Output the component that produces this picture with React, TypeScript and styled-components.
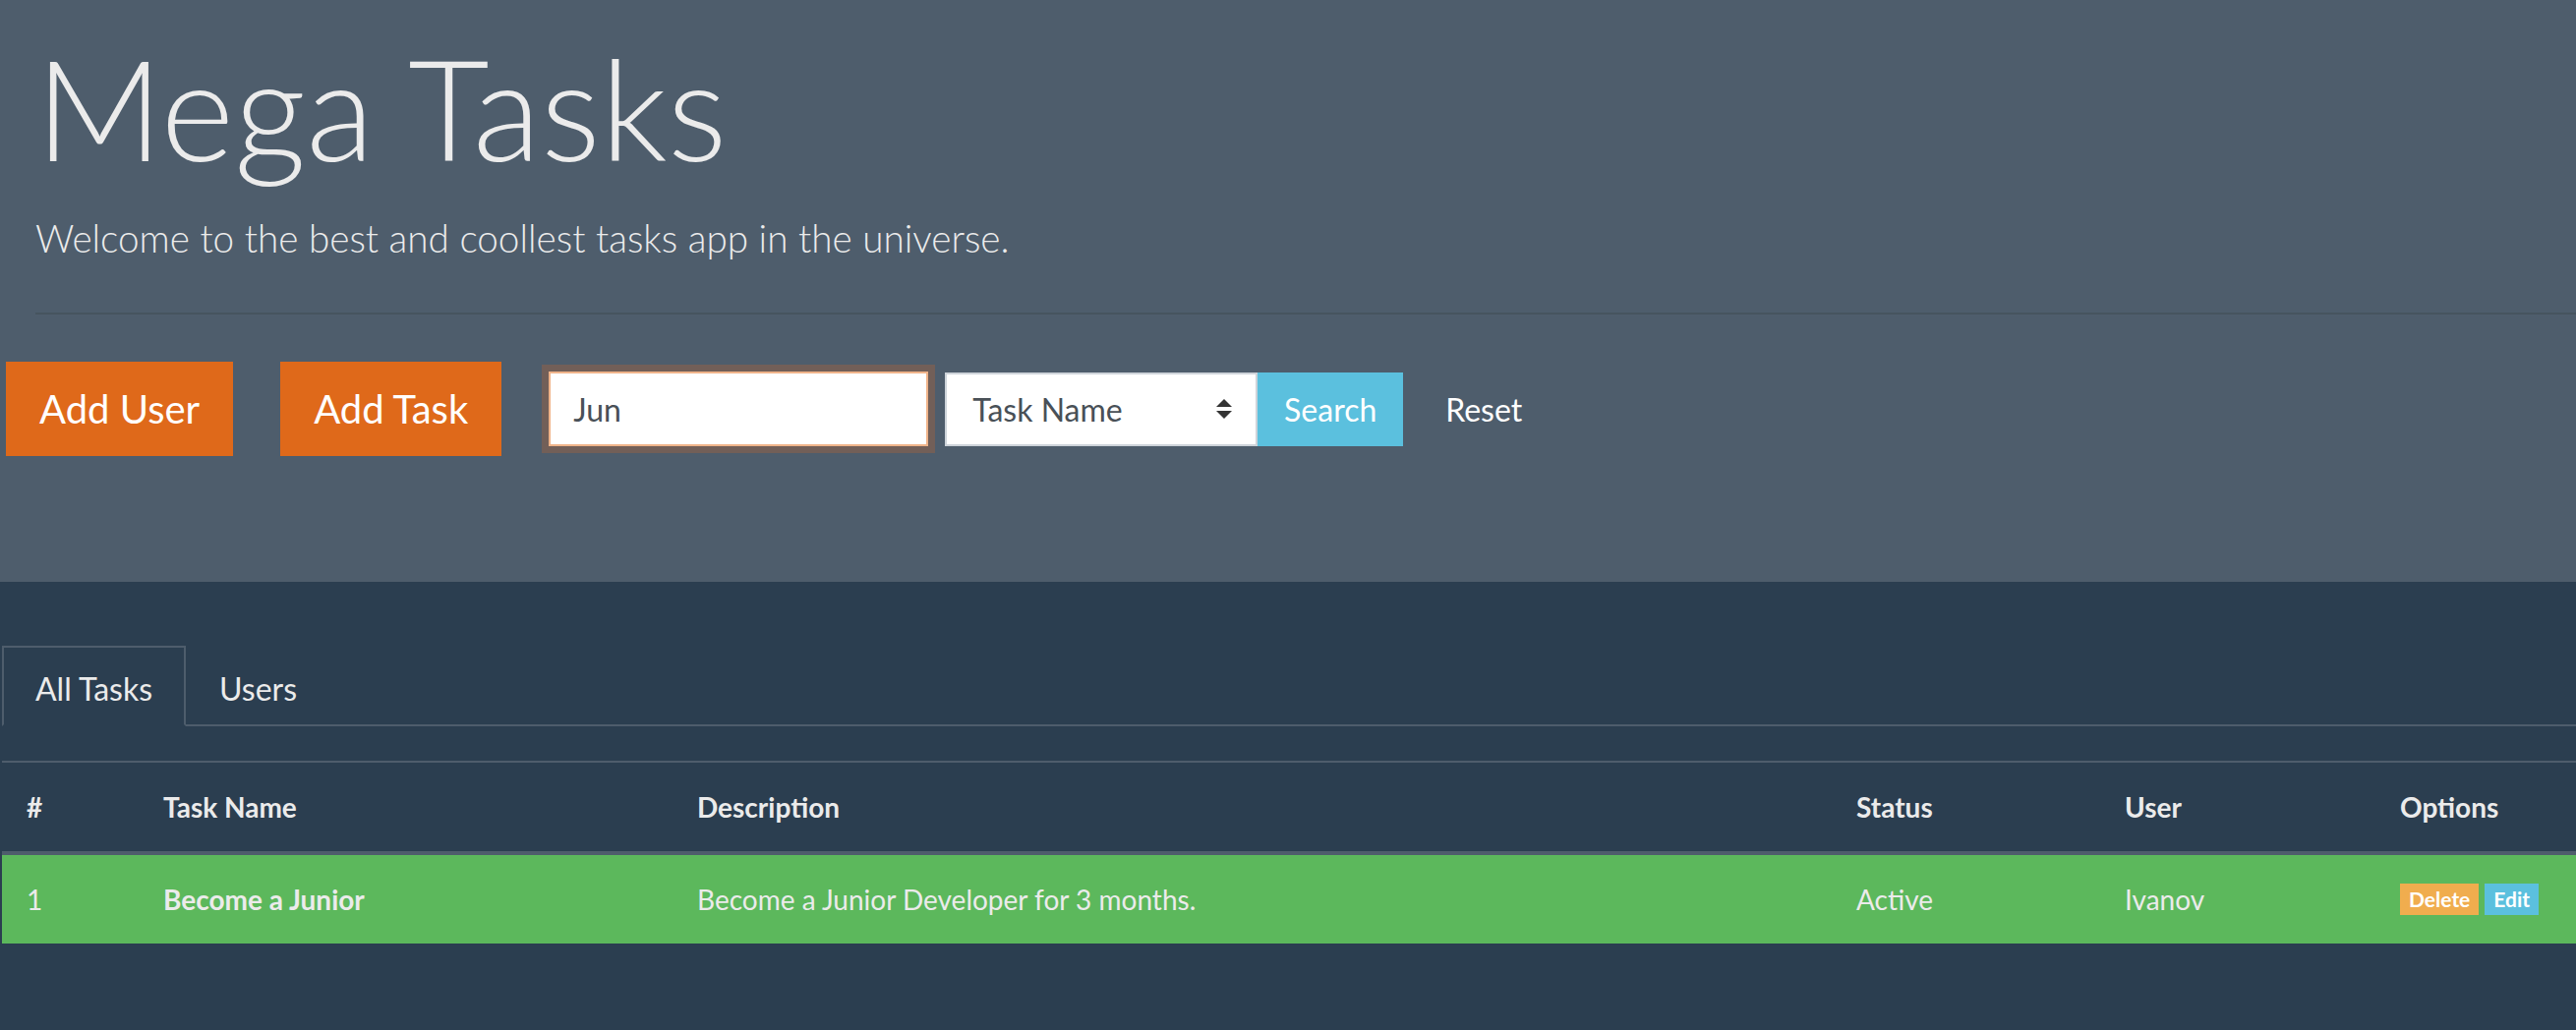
import React from "react";
import styled, { createGlobalStyle } from "styled-components";

const Global = createGlobalStyle`
  html, body { margin: 0; padding: 0; }
  body {
    background: #2b3e50;
    color: #ebebeb;
    font-family: Lato, "Open Sans", "Liberation Sans", sans-serif;
  }
  * { box-sizing: border-box; }
`;

const Jumbotron = styled.header`
  background: #4e5d6c;
  padding: 24px 0 128px 0;
  display: flex;
  flex-direction: column;
`;

const Intro = styled.div`
  padding-left: 36px;
  display: flex;
  flex-direction: column;
`;

const Title = styled.h1`
  margin: 0;
  font-size: 143px;
  font-weight: 300;
  line-height: 170px;
  color: #ebebeb;
`;

const Lead = styled.p`
  margin: 18px 0 0 0;
  font-size: 38.7px;
  font-weight: 300;
  line-height: 60px;
  color: #ebebeb;
`;

const Rule = styled.hr`
  margin: 46px 0 0 0;
  border: 0;
  height: 2px;
  background: #46545f;
`;

const Toolbar = styled.div`
  margin-top: 48px;
  padding-left: 6px;
  display: flex;
  align-items: center;
`;

const PrimaryButton = styled.button<{ $gap: number }>`
  height: 96px;
  padding: 0 34px;
  border: 0;
  border-radius: 0;
  background: #df691a;
  color: #ffffff;
  font-family: inherit;
  font-size: 40px;
  font-weight: 400;
  margin-right: ${(p) => p.$gap}px;
`;

const SearchInput = styled.input`
  width: 386px;
  height: 76px;
  padding: 0 23px;
  border: 2px solid #f0b48a;
  border-radius: 0;
  outline: none;
  box-shadow: 0 0 0 7px rgba(223, 105, 26, 0.25);
  background: #ffffff;
  color: #495057;
  font-family: inherit;
  font-size: 32px;
  margin-right: 17px;
`;

const SelectBox = styled.div`
  width: 318px;
  height: 75px;
  padding: 0 24px 0 26px;
  background: #ffffff;
  border: 2px solid #ced4da;
  display: flex;
  align-items: center;
  justify-content: space-between;
  color: #495057;
  font-size: 32px;
`;

const InfoButton = styled.button`
  height: 75px;
  width: 148px;
  border: 0;
  border-radius: 0;
  background: #5bc0de;
  color: #ffffff;
  font-family: inherit;
  font-size: 32px;
`;

const LinkButton = styled.button`
  height: 75px;
  padding: 0 22px 0 43px;
  border: 0;
  background: transparent;
  color: #ffffff;
  font-family: inherit;
  font-size: 32px;
`;

const Main = styled.main`
  margin-top: 65px;
  padding-left: 2px;
`;

const Tabs = styled.nav`
  display: flex;
  border-bottom: 2px solid #4e5d6c;
`;

const Tab = styled.div<{ $active?: boolean }>`
  padding: 4px 32px 0 32px;
  height: 82px;
  margin-bottom: -2px;
  display: flex;
  align-items: center;
  font-size: 32px;
  color: #ebebeb;
  border: 2px solid ${(p) => (p.$active ? "#4e5d6c" : "transparent")};
  border-bottom-color: ${(p) => (p.$active ? "#2b3e50" : "transparent")};
  background: ${(p) => (p.$active ? "#2b3e50" : "transparent")};
`;

const Table = styled.table`
  margin-top: 35px;
  width: 2618px;
  border-collapse: collapse;
  table-layout: fixed;
  font-size: 28px;
  line-height: 42px;
`;

const HeadCell = styled.th`
  text-align: left;
  font-weight: 700;
  padding: 24px 25px;
  border-top: 2px solid #4e5d6c;
  border-bottom: 4px solid #4e5d6c;
  color: #ebebeb;
`;

const Row = styled.tr`
  background: #5cb85c;
`;

const Cell = styled.td<{ $bold?: boolean }>`
  padding: 24px 25px;
  font-weight: ${(p) => (p.$bold ? 700 : 400)};
  color: #ebebeb;
  vertical-align: middle;
`;

const Actions = styled.div`
  display: flex;
  gap: 6px;
`;

const Badge = styled.span<{ $color: string }>`
  display: inline-flex;
  align-items: center;
  height: 32px;
  padding: 0 9px;
  background: ${(p) => p.$color};
  color: #ffffff;
  font-size: 21px;
  font-weight: 700;
`;

const SortArrows = () => (
  <svg width="16" height="20" viewBox="0 0 16 20" aria-hidden>
    <polygon points="8,0 16,8 0,8" fill="#333" />
    <polygon points="0,12 16,12 8,20" fill="#333" />
  </svg>
);

const columns: { label: string; width: number }[] = [
  { label: "#", width: 139 },
  { label: "Task Name", width: 543 },
  { label: "Description", width: 1179 },
  { label: "Status", width: 273 },
  { label: "User", width: 280 },
  { label: "Options", width: 204 },
];

export default function App() {
  return (
    <>
      <Global />
      <Jumbotron>
        <Intro>
          <Title>Mega Tasks</Title>
          <Lead>Welcome to the best and coollest tasks app in the universe.</Lead>
          <Rule />
        </Intro>
        <Toolbar>
          <PrimaryButton $gap={48}>Add User</PrimaryButton>
          <PrimaryButton $gap={48}>Add Task</PrimaryButton>
          <SearchInput defaultValue="Jun" />
          <SelectBox>
            <span>Task Name</span>
            <SortArrows />
          </SelectBox>
          <InfoButton>Search</InfoButton>
          <LinkButton>Reset</LinkButton>
        </Toolbar>
      </Jumbotron>
      <Main>
        <Tabs>
          <Tab $active>All Tasks</Tab>
          <Tab>Users</Tab>
        </Tabs>
        <Table>
          <colgroup>
            {columns.map((c) => (
              <col key={c.label} style={{ width: c.width }} />
            ))}
          </colgroup>
          <thead>
            <tr>
              {columns.map((c) => (
                <HeadCell key={c.label}>{c.label}</HeadCell>
              ))}
            </tr>
          </thead>
          <tbody>
            <Row>
              <Cell>1</Cell>
              <Cell $bold>Become a Junior</Cell>
              <Cell>Become a Junior Developer for 3 months.</Cell>
              <Cell>Active</Cell>
              <Cell>Ivanov</Cell>
              <Cell>
                <Actions>
                  <Badge $color="#f0ad4e">Delete</Badge>
                  <Badge $color="#5bc0de">Edit</Badge>
                </Actions>
              </Cell>
            </Row>
          </tbody>
        </Table>
      </Main>
    </>
  );
}
